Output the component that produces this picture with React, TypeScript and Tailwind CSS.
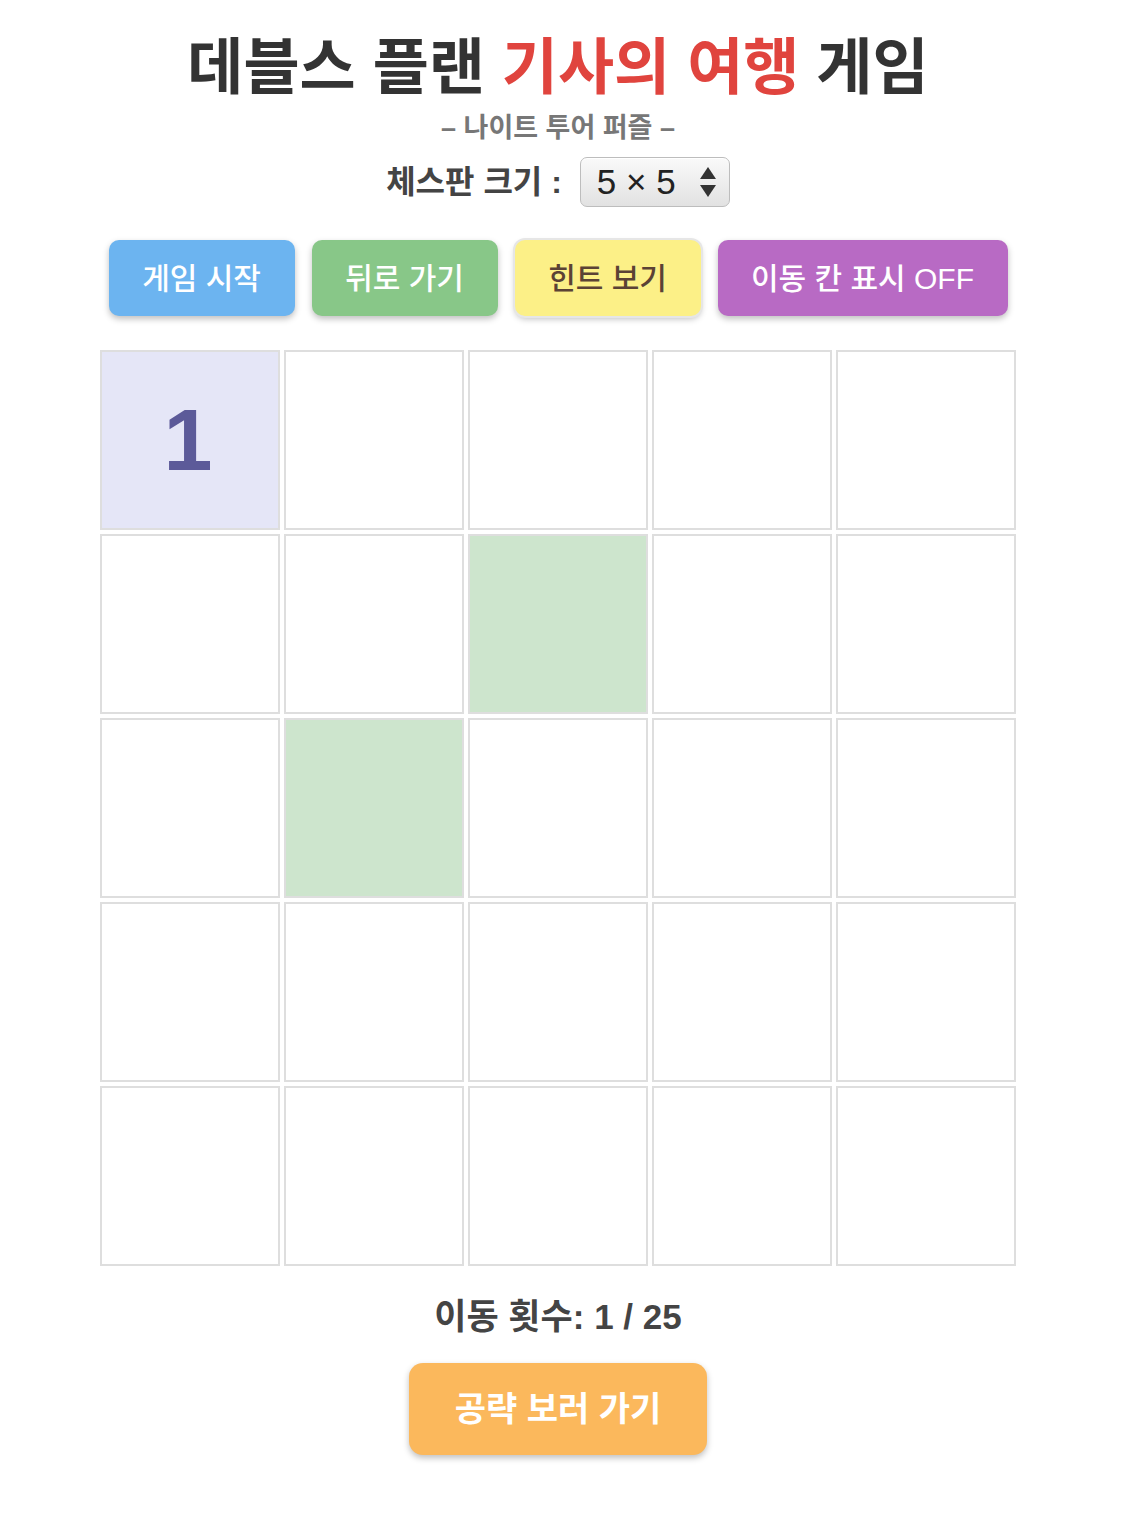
const SIZE = 5;

// cells that are reachable from the current knight position
const hints = new Set(["1-2", "2-1"]);

const buttons = [
  { label: "게임 시작", cls: "w-[186px] bg-[#6cb4f0] text-white" },
  { label: "뒤로 가기", cls: "w-[186px] bg-[#88c788] text-white" },
  { label: "힌트 보기", cls: "w-[186px] bg-[#fcf087] text-[#5b4235] ring-2 ring-[#e6e6e6]" },
  { label: "이동 칸 표시 OFF", cls: "w-[290px] bg-[#b86ac4] text-white" },
];

function Cell({ r, c }: { r: number; c: number }) {
  const visited = r === 0 && c === 0;
  const hint = hints.has(`${r}-${c}`);
  const bg = visited ? "bg-[#e5e6f7]" : hint ? "bg-[#cde5cd]" : "bg-white";
  return (
    <div
      className={`flex h-[180px] w-[180px] items-center justify-center border-2 border-[#dedede] ${bg}`}
    >
      {visited && (
        <span className="pr-[4px] text-[88px] font-bold leading-none text-[#5c5a99] [font-family:'Liberation_Sans',sans-serif]">
          1
        </span>
      )}
    </div>
  );
}

export default function App() {
  return (
    <div className="flex w-[1116px] flex-col items-center bg-white pb-20 [font-family:'Liberation_Sans','Noto_Sans_CJK_KR',sans-serif]">
      <h1 className="mt-[28px] text-[61px] font-bold leading-[80px] text-[#333]">
        데블스 플랜 <span className="text-[#e0443e]">기사의 여행</span> 게임
      </h1>
      <p className="mt-[2px] text-[27px] font-bold leading-[36px] text-[#777]">– 나이트 투어 퍼즐 –</p>

      {/* board size */}
      <div className="mt-[11px] flex items-center gap-[18px]">
        <span className="text-[32px] font-bold text-[#444]">체스판 크기 :</span>
        <div className="flex h-[50px] w-[150px] items-center justify-between rounded-[7px] border border-[#bdbdbd] bg-gradient-to-b from-[#fafafa] to-[#e2e2e2] pl-[16px] pr-[12px] shadow-[inset_0_1px_0_#fff]">
          <span className="text-[35px] text-[#222]">5 × 5</span>
          <svg width="18" height="34" viewBox="0 0 18 34">
            <path d="M9 2 L17 14 L1 14 Z" fill="#333" />
            <path d="M9 32 L17 20 L1 20 Z" fill="#333" />
          </svg>
        </div>
      </div>

      {/* controls */}
      <div className="mt-[33px] flex gap-[17px]">
        {buttons.map((b) => (
          <button
            key={b.label}
            className={`h-[76px] rounded-[10px] text-[30px] font-medium shadow-[0_3px_6px_rgba(0,0,0,0.25)] ${b.cls}`}
          >
            {b.label}
          </button>
        ))}
      </div>

      {/* board */}
      <div className="mt-[34px] grid grid-cols-5 gap-[4px]">
        {Array.from({ length: SIZE * SIZE }, (_, i) => (
          <Cell key={i} r={Math.floor(i / SIZE)} c={i % SIZE} />
        ))}
      </div>

      <p className="mt-[27px] text-[35px] font-bold leading-[48px] text-[#444]">이동 횟수: 1 / 25</p>

      <button className="mt-[22px] h-[92px] w-[298px] rounded-[14px] bg-[#fbb85c] text-[34px] font-bold text-white shadow-[0_3px_6px_rgba(0,0,0,0.25)]">
        공략 보러 가기
      </button>
    </div>
  );
}
